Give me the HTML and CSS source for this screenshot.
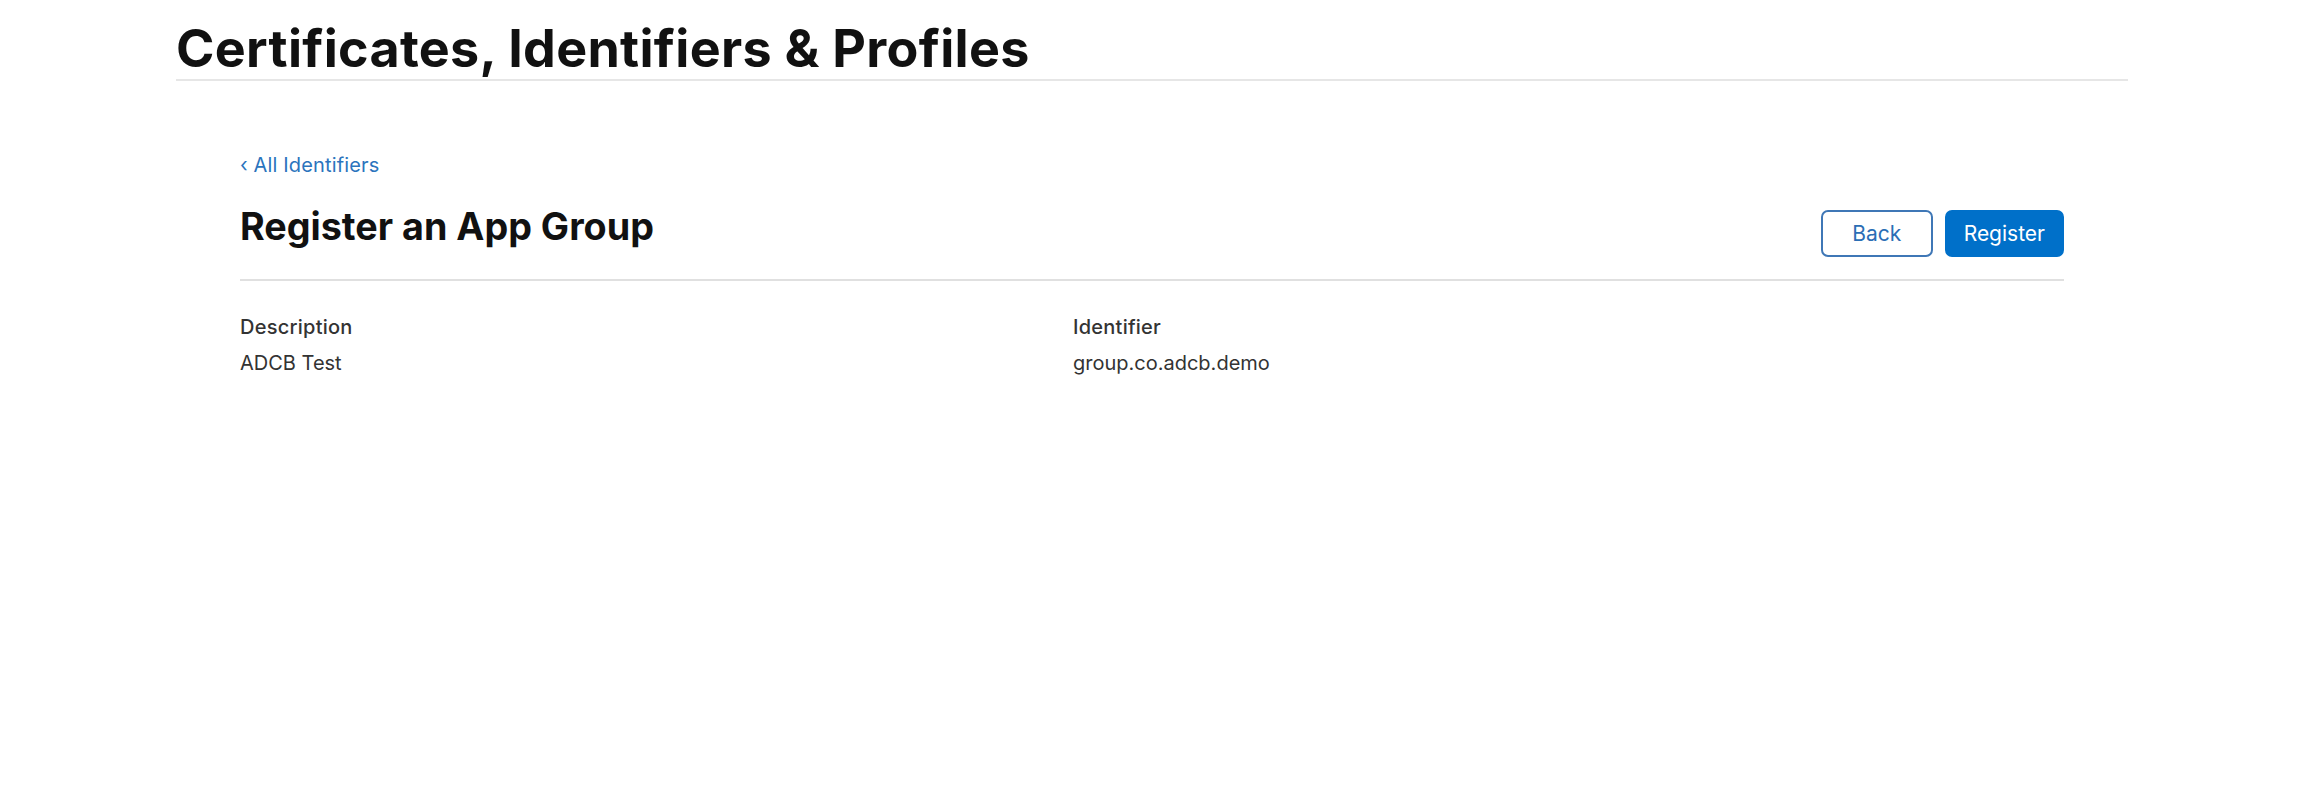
FILE: index.html
```html
<!DOCTYPE html>
<html lang="en">
<head>
<meta charset="utf-8">
<title>Register an App Group</title>
<link rel="stylesheet" href="styles.css">
</head>
<body>
<header class="page-header">
  <h1 class="page-title">Certificates, Identifiers &amp; Profiles</h1>
</header>
<main class="content">
  <a class="back-link" href="#">&lsaquo; All Identifiers</a>
  <div class="title-row">
    <h2 class="section-title">Register an App Group</h2>
    <div class="actions">
      <button class="btn btn-secondary" type="button">Back</button>
      <button class="btn btn-primary" type="button">Register</button>
    </div>
  </div>
  <div class="details">
    <div class="field">
      <div class="field-label">Description</div>
      <div class="field-value">ADCB Test</div>
    </div>
    <div class="field">
      <div class="field-label">Identifier</div>
      <div class="field-value">group.co.adcb.demo</div>
    </div>
  </div>
</main>
</body>
</html>
```

FILE: styles.css
```css
html, body {
  margin: 0;
  padding: 0;
  background: #ffffff;
  font-family: Inter, "Liberation Sans", Arial, sans-serif;
  color: #333333;
}

.page-header {
  width: 1952px;
  margin: 0 auto;
  padding-top: 18px;
  border-bottom: 2px solid #e6e6e6;
}

.page-title {
  margin: 0;
  font-size: 52px;
  line-height: 61px;
  font-weight: 700;
  color: #111111;
  letter-spacing: 0.3px;
}

.content {
  width: 1824px;
  margin: 0 auto;
  padding-top: 72px;
}

.back-link {
  display: block;
  font-size: 20px;
  line-height: 24px;
  color: #2b74bd;
  text-decoration: none;
  letter-spacing: 0.15px;
}

.title-row {
  display: flex;
  justify-content: space-between;
  align-items: flex-start;
  margin-top: 27px;
  padding-bottom: 22px;
  border-bottom: 2px solid #e0e0e0;
}

.section-title {
  margin: 0;
  font-size: 37.7px;
  line-height: 44px;
  font-weight: 700;
  color: #111111;
}

.actions {
  display: flex;
  gap: 12px;
  margin-top: 6px;
}

.btn {
  box-sizing: border-box;
  height: 47px;
  padding: 0 17px;
  border-radius: 7px;
  font-family: Inter, "Liberation Sans", Arial, sans-serif;
  font-size: 21px;
  font-weight: 400;
  cursor: pointer;
}

.btn-secondary {
  min-width: 112px;
  background: #ffffff;
  color: #2b6eb5;
  border: 2px solid #3f77b6;
}

.btn-primary {
  min-width: 119px;
  background: #0070c9;
  color: #ffffff;
  border: 2px solid #0070c9;
}

.details {
  display: grid;
  grid-template-columns: 833px 1fr;
  padding-top: 34px;
}

.field-label {
  font-size: 20px;
  line-height: 24px;
  font-weight: 500;
  letter-spacing: 0.25px;
  color: #333333;
  margin-bottom: 12px;
}

.field-value {
  font-size: 20px;
  line-height: 24px;
  font-weight: 400;
  color: #333333;
}
```
